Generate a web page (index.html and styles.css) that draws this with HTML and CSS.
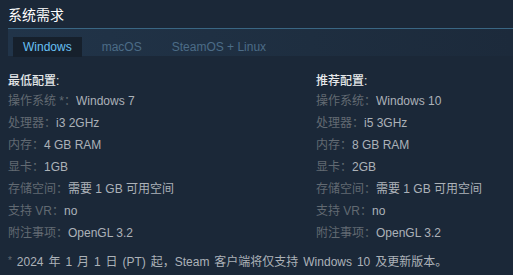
FILE: index.html
```html
<!DOCTYPE html>
<html lang="zh">
<head>
<meta charset="utf-8">
<link rel="stylesheet" href="styles.css">
</head>
<body>
<div class="page">
  <h2 class="title">系统需求</h2>
  <div class="tabs">
    <span class="tab active">Windows</span>
    <span class="tab">macOS</span>
    <span class="tab">SteamOS + Linux</span>
  </div>
  <div class="reqs">
    <div class="col">
      <div class="head">最低配置:</div>
      <ul class="list">
        <li><span class="lbl">操作系统 *：</span>Windows 7</li>
        <li><span class="lbl">处理器：</span>i3 2GHz</li>
        <li><span class="lbl">内存：</span>4 GB RAM</li>
        <li><span class="lbl">显卡：</span>1GB</li>
        <li><span class="lbl">存储空间：</span>需要 1 GB 可用空间</li>
        <li><span class="lbl">支持 VR：</span>no</li>
        <li><span class="lbl">附注事项：</span>OpenGL 3.2</li>
      </ul>
    </div>
    <div class="col">
      <div class="head">推荐配置:</div>
      <ul class="list">
        <li><span class="lbl">操作系统：</span>Windows 10</li>
        <li><span class="lbl">处理器：</span>i5 3GHz</li>
        <li><span class="lbl">内存：</span>8 GB RAM</li>
        <li><span class="lbl">显卡：</span>2GB</li>
        <li><span class="lbl">存储空间：</span>需要 1 GB 可用空间</li>
        <li><span class="lbl">支持 VR：</span>no</li>
        <li><span class="lbl">附注事项：</span>OpenGL 3.2</li>
      </ul>
    </div>
  </div>
  <p class="note"><span class="star">*</span> 2024 年 1 月 1 日 (PT) 起，Steam 客户端将仅支持 Windows 10 及更新版本。</p>
</div>
</body>
</html>
```
FILE: styles.css
```css
html, body {
  margin: 0;
  padding: 0;
  background: #1b2838;
}
.page {
  padding: 7px 0 0 8px;
  font-family: "Liberation Sans", Arial, "Noto Sans CJK SC", sans-serif;
  font-size: 12px;
  color: #acb2b8;
}
.title {
  margin: 0;
  font-size: 14px;
  line-height: 16px;
  font-weight: normal;
  color: #ffffff;
}
.tabs {
  margin-top: 5px;
  height: 28px;
  box-sizing: border-box;
  border-top: 1px solid #3a6683;
  background: linear-gradient(90deg, #213449 0%, #1e2e40 60%, #1c2a3b 100%);
  padding: 8px 0 0 5px;
  display: flex;
  gap: 10px;
}
.tab {
  height: 20px;
  line-height: 20px;
  padding: 0 10px;
  color: #4c6c87;
}
.tab.active {
  background: #16202c;
  color: #67c1f5;
}
.reqs {
  display: grid;
  grid-template-columns: 308px 1fr;
  margin-top: 16px;
}
.head {
  line-height: 18px;
  color: #e6e8ea;
  font-weight: 500;
}
.list {
  list-style: none;
  margin: 0;
  padding: 0;
}
.list li {
  line-height: 22px;
  white-space: nowrap;
}
.lbl {
  color: #626a72;
}
.note {
  margin: 6px 0 0;
  line-height: 22px;
  color: #acb2b8;
  word-spacing: 1.6px;
  white-space: nowrap;
}
.star {
  color: #626a72;
  font-size: 10px;
  vertical-align: 2px;
}
```
